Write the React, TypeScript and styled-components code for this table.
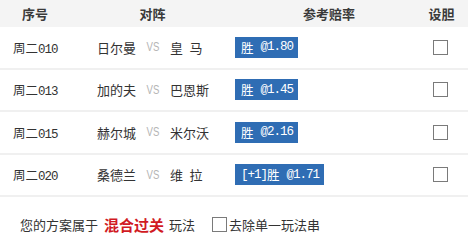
import styled, { createGlobalStyle } from "styled-components";

const GlobalStyle = createGlobalStyle`
  body {
    margin: 0;
    background: #fff;
    font-family: "Noto Sans CJK SC", sans-serif;
    color: #333;
  }
`;

const Wrapper = styled.div`
  width: 468px;
`;

const cols = "70px 165px 188px 45px";

const HeadRow = styled.div`
  display: grid;
  grid-template-columns: ${cols};
  height: 27px;
  align-items: center;
  background-color: #f4f4f4;
  font-size: 13px;
  font-weight: 700;
  color: #3a3a3a;
`;

const HeadCell = styled.div<{ $shift?: number }>`
  text-align: center;
  transform: translateX(${(p) => p.$shift ?? 0}px);
`;

const Row = styled.div`
  display: grid;
  grid-template-columns: ${cols};
  height: 40.5px;
  align-items: center;
  border-bottom: 2px solid #f0f0f0;
  font-size: 13px;
`;

// ascii digits in a fixed-width face, like the old lottery pages
const Mono = styled.span`
  font-family: "Liberation Mono", monospace;
  font-size: 12.5px;
  letter-spacing: -1px;
`;

const No = styled.div`
  padding-left: 13px;
  font-size: 12.5px;
`;

const Match = styled.div`
  display: flex;
  align-items: center;
  padding-left: 27px;
`;

const Team = styled.span`
  white-space: pre;
`;

const Vs = styled.span`
  font-family: "Liberation Sans", sans-serif;
  font-size: 12px;
  color: #b5b5b5;
  margin: 0 9px 0 9px;
  display: inline-block;
  transform: scaleX(0.8);
`;

const Odds = styled.div`
  display: flex;
`;

const Badge = styled.span`
  display: inline-flex;
  align-items: center;
  background-color: #2f6db4;
  color: #fff;
  font-size: 12.5px;
  height: 21px;
  padding: 0 5px 0 6px;
  white-space: pre;
`;

const Gap = styled.span`
  display: inline-block;
  width: 7px;
`;

const Box = styled.span`
  display: inline-block;
  width: 13px;
  height: 13px;
  border: 1px solid #7a7a7a;
  background: #fff;
`;

const BoxCell = styled.div`
  display: flex;
  justify-content: center;
  padding-right: 10px;
`;

const Footer = styled.div`
  display: flex;
  align-items: center;
  height: 14px;
  padding: 20px 0 6px 20px;
  font-size: 13px;
  color: #333;
`;

const Red = styled.b`
  color: #d11a23;
  font-size: 15px;
  margin: 0 5px 0 6px;
`;

const FooterBox = styled(Box)`
  margin: 0 2px 0 17px;
`;

const rows = [
  { no: "010", home: "日尔曼", away: "皇\u2002马", pre: "", odds: "1.80" },
  { no: "013", home: "加的夫", away: "巴恩斯", pre: "", odds: "1.45" },
  { no: "015", home: "赫尔城", away: "米尔沃", pre: "", odds: "2.16" },
  { no: "020", home: "桑德兰", away: "维\u2002拉", pre: "[+1]", odds: "1.71" },
];

export default function App() {
  return (
    <Wrapper>
      <GlobalStyle />
      <HeadRow>
        <HeadCell>序号</HeadCell>
        <HeadCell>对阵</HeadCell>
        <HeadCell>参考赔率</HeadCell>
        <HeadCell $shift={-4}>设胆</HeadCell>
      </HeadRow>
      {rows.map((r) => (
        <Row key={r.no}>
          <No>
            周二<Mono>{r.no}</Mono>
          </No>
          <Match>
            <Team>{r.home}</Team>
            <Vs>VS</Vs>
            <Team>{r.away}</Team>
          </Match>
          <Odds>
            <Badge>
              {r.pre && <Mono>{r.pre}</Mono>}胜<Gap />
              <Mono>@{r.odds}</Mono>
            </Badge>
          </Odds>
          <BoxCell>
            <Box />
          </BoxCell>
        </Row>
      ))}
      <Footer>
        您的方案属于<Red>混合过关</Red>玩法
        <FooterBox />
        去除单一玩法串
      </Footer>
    </Wrapper>
  );
}
